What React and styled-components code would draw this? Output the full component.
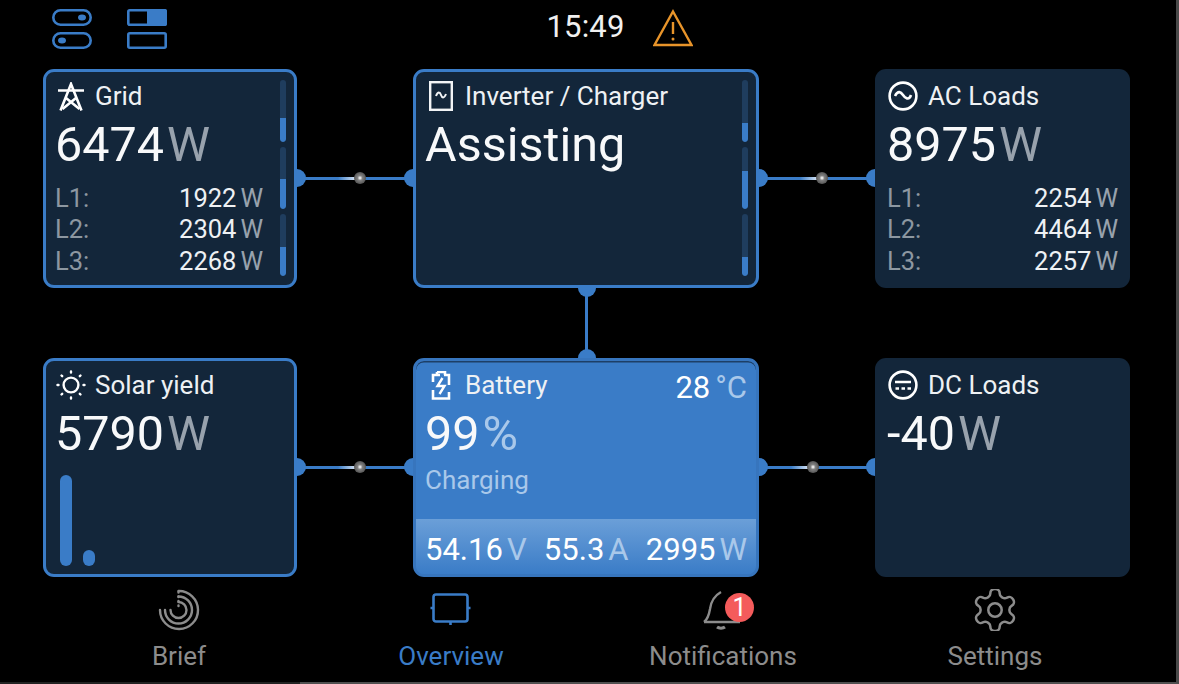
import React from "react";
import styled, { createGlobalStyle } from "styled-components";

const Global = createGlobalStyle`
  html, body { margin: 0; padding: 0; background: #000; }
  body { font-family: Roboto, "Liberation Sans", sans-serif; overflow: hidden; font-weight: 400; }
`;

const BLUE = "#3a7cc7";
const CARD = "#13263a";

const Page = styled.div`
  position: relative; width: 1176px; height: 682px; background: #000;
  border-right: 3px solid #4a4a4a; border-bottom: 2px solid #4f4f4f;
  display: flex; flex-direction: column;
  &::after { content: ""; position: absolute; left: 0; bottom: -2px; width: 300px; height: 2px; background: #222; }
`;
const Header = styled.header`
  height: 69px; box-sizing: border-box; padding-top: 9px; display: grid; grid-template-columns: 1fr auto 1fr; align-items: start; padding-right: 5px;
`;
const LeftTools = styled.div`display: flex; gap: 35px; padding-left: 52px;`;
const Clock = styled.div`font-size: 31px; color: #f0f0f0; line-height: 36px; letter-spacing: .2px;`;
const RightTools = styled.div`padding-left: 28px; display: flex;`;
const Diagram = styled.main`
  display: grid; margin-left: 43px;
  grid-template-columns: 254px 116px 346px 116px 255px;
  grid-template-rows: 219px 70px 219px;
`;
const Card = styled.section`
  box-sizing: border-box; position: relative; border-radius: 11px; overflow: hidden; min-width: 0;
  background: ${p => p.$primary ? BLUE : CARD};
  border: ${p => p.$plain ? "0" : `3px solid ${BLUE}`};
  padding: ${p => p.$plain ? "9px 12px 0 12px" : "6px 9px 0 9px"};
  color: #fff;
  ${p => p.$primary ? "box-shadow: inset 0 1.5px 0 #1d3f66; border-color: #3775bd;" : ""}
`;
const Title = styled.div`display: flex; align-items: center; height: 36px; font-size: 26px; gap: ${p => p.$gap || 8}px; color: #eef1f4;`;
const IconSlot = styled.span`width: 32px; height: 32px; display: flex; align-items: center; justify-content: center; flex: none;`;
const Big = styled.div`font-size: 48.5px; line-height: 56px; margin-top: 3px; color: #f8f9fa;`;
const Unit = styled.span`color: ${p => p.$light ? "#a9c8ea" : "#98a2ad"}; margin-left: ${p => p.$gap || 3}px;`;
const Rows = styled.div`
  display: grid; grid-auto-rows: 31.5px; margin-top: 9px; font-size: 25.5px;
  width: ${p => p.$w}px;
`;
const Row = styled.div`display: flex; justify-content: space-between; align-items: center; color: #eef1f4;`;
const RowLabel = styled.span`color: #8d97a1;`;
const Bars = styled.div`
  position: absolute; top: 8px; right: ${p => p.$right}px; width: 6px; display: grid; grid-template-rows: repeat(3, 62px); gap: 5px;
`;
const Track = styled.div`background: #1f3d5e; border-radius: 3px; display: flex; align-items: flex-end; overflow: hidden;`;
const Fill = styled.div`background: ${BLUE}; width: 100%; border-radius: 0 0 3px 3px;`;
const Corner = styled.div`position: absolute; top: 9px; right: 9px; font-size: 31px; line-height: 36px;`;
const Status = styled.div`font-size: 26px; color: #a9c8ea; margin-top: 3px;`;
const Foot = styled.div`
  position: absolute; left: 0; right: 0; bottom: 0; height: 55px; box-sizing: border-box;
  padding: 9px 9px 0 9px; display: flex; justify-content: space-between; font-size: 31px; line-height: 44px;
  background: linear-gradient(#6b9fd8, ${BLUE});
`;
const SolarBars = styled.div`
  position: absolute; left: 14px; bottom: 8px; display: flex; align-items: flex-end; gap: 11px;
`;
const SolarBar = styled.div`width: 12px; border-radius: 6px; background: ${BLUE};`;

const HLink = styled.div`position: relative; display: flex; align-items: center;`;
const HLine = styled.div`flex: 1; height: 3px; background: ${BLUE}; margin-top: -1px;`;
const VLink = styled.div`position: relative; display: flex; justify-content: center; margin-left: 1px;`;
const VLine = styled.div`width: 3px; background: ${BLUE};`;
const AnchorH = styled.span`
  position: absolute; top: 50%; margin-top: -10px; width: 9px; height: 18px; background: ${BLUE};
  ${p => p.$side === "l" ? "left: 0; border-radius: 0 9px 9px 0;" : "right: 0; border-radius: 9px 0 0 9px;"}
`;
const AnchorV = styled.span`
  position: absolute; left: 50%; margin-left: -9px; width: 18px; height: 9px; background: ${BLUE};
  ${p => p.$side === "t" ? "top: 0; border-radius: 0 0 9px 9px;" : "bottom: 0; border-radius: 9px 9px 0 0;"}
`;
const Trail = styled.span`
  position: absolute; top: 50%; margin-top: -2px; height: 3px; width: 22px; background: linear-gradient(90deg, rgba(255,255,255,0), #fff);
`;
const Dot = styled.span`
  position: absolute; top: 50%; margin-top: -7px; width: 12px; height: 12px; border-radius: 50%;
  background: radial-gradient(circle, #fff 0, #ddd 10%, #808080 30%, #5c5c5c 65%, #454545 100%);
`;
const Spark = ({ x }) => (<><Trail style={{ left: x - 22 }} /><Dot style={{ left: x - 6 }} /></>);

const Nav = styled.nav`
  display: grid; grid-template-columns: repeat(4, 272px); margin-left: 43px; margin-top: 11px;
`;
const NavItem = styled.div`
  position: relative; display: flex; flex-direction: column; align-items: center; font-size: 26px;
  color: ${p => p.$active ? BLUE : "#8c8c8c"}; 
`;
const NavIcon = styled.div`height: 44px; width: 44px; display: flex; align-items: center; justify-content: center; position: relative;`;
const NavLabel = styled.div`line-height: 30px; margin-top: 9px;`;
const Badge = styled.span`
  position: absolute; top: 5px; left: 24px; width: 29px; height: 29px; border-radius: 50%; background: #f45b5b;
  color: #fff; font-size: 25px; line-height: 29px; text-align: center; 
`;

const Toggles = () => (
  <svg width="40" height="40" viewBox="0 0 40 40" fill="none" stroke={BLUE} strokeWidth="2.6">
    <rect x="1.3" y="1.3" width="37.4" height="14.4" rx="7.2" /><rect x="1.3" y="24.3" width="37.4" height="14.4" rx="7.2" />
    <ellipse cx="30" cy="8.5" rx="4" ry="3" fill={BLUE} stroke="none" /><ellipse cx="10" cy="31.5" rx="4" ry="3" fill={BLUE} stroke="none" />
  </svg>
);
const Panels = () => (
  <svg width="40" height="40" viewBox="0 0 40 40" fill="none" stroke={BLUE} strokeWidth="2.6">
    <rect x="1.3" y="1.3" width="37.4" height="14.4" rx="1.5" /><rect x="1.3" y="24.3" width="37.4" height="14.4" rx="1.5" />
    <rect x="20" y="0" width="20" height="17" rx="2" fill={BLUE} stroke="none" />
  </svg>
);
const Warning = () => (
  <svg width="40" height="38" viewBox="0 0 40 38" fill="none" stroke="#e8942a" strokeWidth="2.4" strokeLinejoin="miter">
    <path d="M20 2.5 L38.5 36 H1.5 Z" />
    <path d="M20 13 V25" strokeWidth="2.4" /><circle cx="20" cy="30" r="1.5" fill="#e8942a" stroke="none" />
  </svg>
);
const Pylon = () => (
  <svg width="26" height="29" viewBox="0 0 26 29" fill="none" stroke="#fff" strokeWidth="2.6">
    <path d="M2.5 28.5 L13 2 L23.5 28.5" /><path d="M0 8.5 H26" /><path d="M8 16 L21.5 27 M18 16 L4.5 27" />
  </svg>
);
const Inverter = () => (
  <svg width="24" height="30" viewBox="0 0 24 30" fill="none" stroke="#f2f4f6" strokeWidth="2.4">
    <rect x="1.2" y="1.2" width="21.6" height="27.6" /><path d="M7 15 C9 10 11 11 12 14 C13 17 15 18 17 13" strokeWidth="2" />
  </svg>
);
const AcIcon = () => (
  <svg width="30" height="30" viewBox="0 0 30 30" fill="none" stroke="#fff" strokeWidth="2.6">
    <circle cx="15" cy="15" r="13.4" /><path d="M7 15 C10 9 13 11 15 14 C17 17 21 20 23 14" />
  </svg>
);
const DcIcon = () => (
  <svg width="30" height="30" viewBox="0 0 30 30" fill="none" stroke="#fff" strokeWidth="2.6">
    <circle cx="15" cy="15" r="13.4" /><path d="M7 12 H23" /><path d="M7.5 18.5 H11 M13.5 18.5 H17 M19.5 18.5 H23" />
  </svg>
);
const Sun = () => (
  <svg width="30" height="30" viewBox="0 0 30 30" fill="none" stroke="#fff" strokeWidth="2.4" strokeLinecap="round">
    <circle cx="15" cy="15" r="7.4" />
    <path d="M15 1.5 V2.5 M15 27.5 V28.5 M1.5 15 H2.5 M27.5 15 H28.5 M5.5 5.5 L6.2 6.2 M23.8 23.8 L24.5 24.5 M5.5 24.5 L6.2 23.8 M23.8 6.2 L24.5 5.5" />
  </svg>
);
const BatteryIcon = () => (
  <svg width="20" height="29" viewBox="0 0 20 29" fill="none" stroke="#fff" strokeWidth="2.6">
    <path d="M6 1 H14 V4" /><path d="M6 1 V4" />
    <path d="M9 4 H2 V11 M2 19 V27.5 H18 V21 M18 14 V4 H13" />
    <path d="M11.5 7 L6.5 15 H13.5 L8.5 23" strokeLinejoin="miter" strokeWidth="2.4" />
  </svg>
);
const BriefIcon = () => (
  <svg width="42" height="42" viewBox="0 0 42 42" fill="none" stroke="#8c8c8c" strokeWidth="2.4" strokeLinecap="round">
    <path d="M20.5 2 A19 19 0 1 1 2 21" />
    <path d="M20.5 7.5 A13.5 13.5 0 1 1 7 21" />
    <path d="M20.5 13 A8 8 0 1 1 12.5 21" />
    <path d="M20.5 3 V3.5 M20.5 7.5 V8 M20.5 12 V12.5 M20.5 16.5 V17" strokeDasharray="1 3" />
  </svg>
);
const OverviewIcon = () => (
  <svg width="42" height="42" viewBox="0 0 42 42" fill="none" stroke={BLUE} strokeWidth="2.6">
    <rect x="3.5" y="5.5" width="34" height="27" rx="2.5" />
    <path d="M0.5 19 H3.5 M37.5 19 H40.5 M20.5 32.5 V36" />
  </svg>
);
const Bell = () => (
  <svg width="42" height="42" viewBox="0 0 42 42" fill="none" stroke="#8c8c8c" strokeWidth="2.4" strokeLinejoin="round">
    <path d="M2 33 C6 30 7 26 8 20 C9 12 12 7 19 3" />
    <path d="M2 33 H38" />
    <path d="M15 38 C17 39.5 21 39.5 23 38" strokeWidth="3" />
  </svg>
);
const Gear = () => (
  <svg width="42" height="42" viewBox="2 2 20 20" fill="none" stroke="#8c8c8c" strokeWidth="1.2" strokeLinecap="round" strokeLinejoin="round">
    <path d="M12.22 2h-.44a2 2 0 0 0-2 2v.18a2 2 0 0 1-1 1.73l-.43.25a2 2 0 0 1-2 0l-.15-.08a2 2 0 0 0-2.73.73l-.22.38a2 2 0 0 0 .73 2.73l.15.1a2 2 0 0 1 1 1.72v.51a2 2 0 0 1-1 1.74l-.15.09a2 2 0 0 0-.73 2.73l.22.38a2 2 0 0 0 2.73.73l.15-.08a2 2 0 0 1 2 0l.43.25a2 2 0 0 1 1 1.73V20a2 2 0 0 0 2 2h.44a2 2 0 0 0 2-2v-.18a2 2 0 0 1 1-1.73l.43-.25a2 2 0 0 1 2 0l.15.08a2 2 0 0 0 2.73-.73l.22-.39a2 2 0 0 0-.73-2.73l-.15-.08a2 2 0 0 1-1-1.74v-.5a2 2 0 0 1 1-1.74l.15-.09a2 2 0 0 0 .73-2.73l-.22-.38a2 2 0 0 0-2.73-.73l-.15.08a2 2 0 0 1-2 0l-.43-.25a2 2 0 0 1-1-1.73V4a2 2 0 0 0-2-2z" />
    <circle cx="12" cy="12" r="3.2" />
  </svg>
);

const Phases = ({ rows, w }) => (
  <Rows $w={w}>
    {rows.map(([l, v]) => (
      <Row key={l}><RowLabel>{l}:</RowLabel><span>{v}<Unit $gap={4}>W</Unit></span></Row>
    ))}
  </Rows>
);
const Level = ({ $right, fills }) => (
  <Bars $right={$right}>
    {fills.map((f, i) => <Track key={i}><Fill style={{ height: f }} /></Track>)}
  </Bars>
);
const HConn = ({ spark }) => (
  <HLink><HLine /><AnchorH $side="l" /><AnchorH $side="r" />{spark != null && <Spark x={spark} />}</HLink>
);

export default function App() {
  return (
    <Page>
      <Global />
      <Header>
        <LeftTools><Toggles /><Panels /></LeftTools>
        <Clock>15:49</Clock>
        <RightTools><Warning /></RightTools>
      </Header>
      <Diagram>
        <Card>
          <Title><IconSlot><Pylon /></IconSlot>Grid</Title>
          <Big>6474<Unit>W</Unit></Big>
          <Phases w={208} rows={[["L1", "1922"], ["L2", "2304"], ["L3", "2268"]]} />
          <Level $right={8} fills={[24, 30, 29]} />
        </Card>
        <HConn spark={63} />
        <Card>
          <Title><IconSlot><Inverter /></IconSlot>Inverter / Charger</Title>
          <Big>Assisting</Big>
          <Level $right={8} fills={[19, 38, 19]} />
        </Card>
        <HConn spark={63} />
        <Card $plain>
          <Title $gap={9}><IconSlot><AcIcon /></IconSlot>AC Loads</Title>
          <Big>8975<Unit>W</Unit></Big>
          <Phases w={231} rows={[["L1", "2254"], ["L2", "4464"], ["L3", "2257"]]} />
        </Card>

        <div />
        <div />
        <VLink><VLine /><AnchorV $side="t" /><AnchorV $side="b" /></VLink>
        <div />
        <div />

        <Card>
          <Title><IconSlot><Sun /></IconSlot>Solar yield</Title>
          <Big>5790<Unit>W</Unit></Big>
          <SolarBars>
            <SolarBar style={{ height: 91 }} />
            <SolarBar style={{ height: 16 }} />
          </SolarBars>
        </Card>
        <HConn spark={63} />
        <Card $primary>
          <Title><IconSlot><BatteryIcon /></IconSlot>Battery</Title>
          <Corner>28<Unit $light $gap={5}>°C</Unit></Corner>
          <Big>99<Unit $light $gap={3}>%</Unit></Big>
          <Status>Charging</Status>
          <Foot>
            <span>54.16<Unit $light $gap={4}>V</Unit></span>
            <span>55.3<Unit $light $gap={4}>A</Unit></span>
            <span>2995<Unit $light $gap={4}>W</Unit></span>
          </Foot>
        </Card>
        <HConn spark={54} />
        <Card $plain>
          <Title $gap={9}><IconSlot><DcIcon /></IconSlot>DC Loads</Title>
          <Big>-40<Unit>W</Unit></Big>
        </Card>
      </Diagram>
      <Nav>
        <NavItem><NavIcon><BriefIcon /></NavIcon><NavLabel>Brief</NavLabel></NavItem>
        <NavItem $active><NavIcon><OverviewIcon /></NavIcon><NavLabel>Overview</NavLabel></NavItem>
        <NavItem><NavIcon><Bell /><Badge>1</Badge></NavIcon><NavLabel>Notifications</NavLabel></NavItem>
        <NavItem><NavIcon><Gear /></NavIcon><NavLabel>Settings</NavLabel></NavItem>
      </Nav>
    </Page>
  );
}
